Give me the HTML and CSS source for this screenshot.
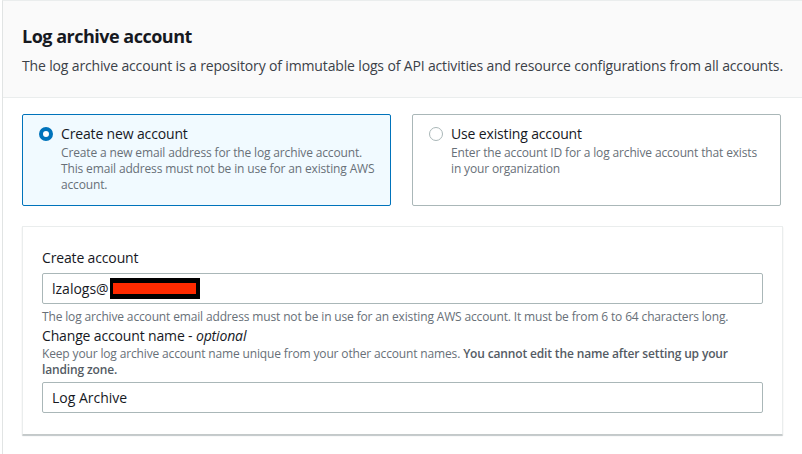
FILE: index.html
```html
<!DOCTYPE html>
<html lang="en">
<head>
<meta charset="utf-8">
<title>Log archive account</title>
<link rel="stylesheet" href="styles.css">
</head>
<body>
<section class="panel">
  <header class="panel-header">
    <h2 class="panel-title">Log archive account</h2>
    <p class="panel-desc">The log archive account is a repository of immutable logs of API activities and resource configurations from all accounts.</p>
  </header>
  <div class="panel-body">
    <div class="tiles">
      <label class="tile tile-selected">
        <span class="radio radio-on"></span>
        <span class="tile-text">
          <span class="tile-title">Create new account</span>
          <span class="tile-desc">Create a new email address for the log archive account. This email address must not be in use for an existing AWS account.</span>
        </span>
      </label>
      <label class="tile">
        <span class="radio"></span>
        <span class="tile-text">
          <span class="tile-title">Use existing account</span>
          <span class="tile-desc">Enter the account ID for a log archive account that exists in your organization</span>
        </span>
      </label>
    </div>
    <div class="box">
      <div class="field-label">Create account</div>
      <div class="input"><span>lzalogs@</span><span class="redact"><span class="redact-inner"></span></span></div>
      <div class="hint">The log archive account email address must not be in use for an existing AWS account. It must be from 6 to 64 characters long.</div>
      <div class="field-label field-label-2">Change account name - <em>optional</em></div>
      <div class="desc">Keep your log archive account name unique from your other account names. <strong>You cannot edit the name after setting up your landing zone.</strong></div>
      <div class="input input-2"><span>Log Archive</span></div>
    </div>
  </div>
</section>
</body>
</html>
```
FILE: styles.css
```css
* { box-sizing: border-box; }
body {
  margin: 0;
  background: #ffffff;
  font-family: "Open Sans", "Noto Sans", Arial, sans-serif;
  color: #16191f;
  letter-spacing: -0.15px;
}
.panel {
  margin-left: 2px;
  border-left: 1px solid #e1e4e4;
  border-top: 1px solid #eaeded;
  height: 454px;
}
.panel-header {
  background: #fafafa;
  border-bottom: 1px solid #eaeded;
  padding: 23px 19px 0;
  height: 97px;
}
.panel-title {
  margin: 0;
  font-size: 18px;
  line-height: 24px;
  font-weight: 700;
  letter-spacing: -0.5px;
  color: #16191f;
}
.panel-desc {
  margin: 8px 0 0;
  font-size: 14px;
  line-height: 20px;
  color: #3b4148;
  white-space: nowrap;
}
.panel-body {
  padding: 16px 19px 0 19px;
}
.tiles {
  display: grid;
  grid-template-columns: 369px 369px;
  column-gap: 21px;
}
.tile {
  display: flex;
  height: 92px;
  border: 1px solid #aab7b8;
  border-radius: 2px;
  padding: 9px 12px 0 16px;
  background: #ffffff;
}
.tile-selected {
  border-color: #0073bb;
  background: #f1faff;
}
.radio {
  flex: none;
  width: 14px;
  height: 14px;
  margin-top: 3px;
  margin-right: 8px;
  border-radius: 50%;
  border: 1px solid #aab7b8;
  background: #ffffff;
}
.radio-on {
  border: 4px solid #0073bb;
}
.tile-text {
  display: flex;
  flex-direction: column;
}
.tile-title {
  font-size: 14px;
  line-height: 20px;
  color: #16191f;
}
.tile-desc {
  margin-top: 1px;
  font-size: 12px;
  line-height: 16px;
  color: #687078;
}
.box {
  margin-top: 20px;
  width: 761px;
  border: 1px solid #eaeded;
  border-bottom-color: #c4c9c9;
  box-shadow: 0 1px 1px rgba(0, 28, 36, 0.25);
  padding: 21px 19px 21px 19px;
  border-radius: 1px;
}
.field-label {
  font-size: 14px;
  line-height: 20px;
  color: #16191f;
}
.input {
  margin-top: 5px;
  height: 31px;
  border: 1px solid #aab7b8;
  border-radius: 2px;
  padding: 0 9px;
  display: flex;
  align-items: center;
  font-size: 14px;
  letter-spacing: 0;
  color: #16191f;
}
.input-2 { margin-top: 4px; }
.redact {
  display: inline-flex;
  align-items: center;
  justify-content: center;
  margin-left: 1px;
  width: 90px;
  height: 21px;
  background: #000000;
}
.redact-inner {
  width: 83px;
  height: 11px;
  background: #ff2a00;
}
.hint {
  margin-top: 5px;
  font-size: 12px;
  line-height: 16px;
  color: #687078;
}
.field-label-2 { margin-top: 1px; }
.desc {
  font-size: 12px;
  line-height: 16px;
  color: #687078;
}
.desc strong {
  color: #545b64;
  font-weight: 600;
}
```
